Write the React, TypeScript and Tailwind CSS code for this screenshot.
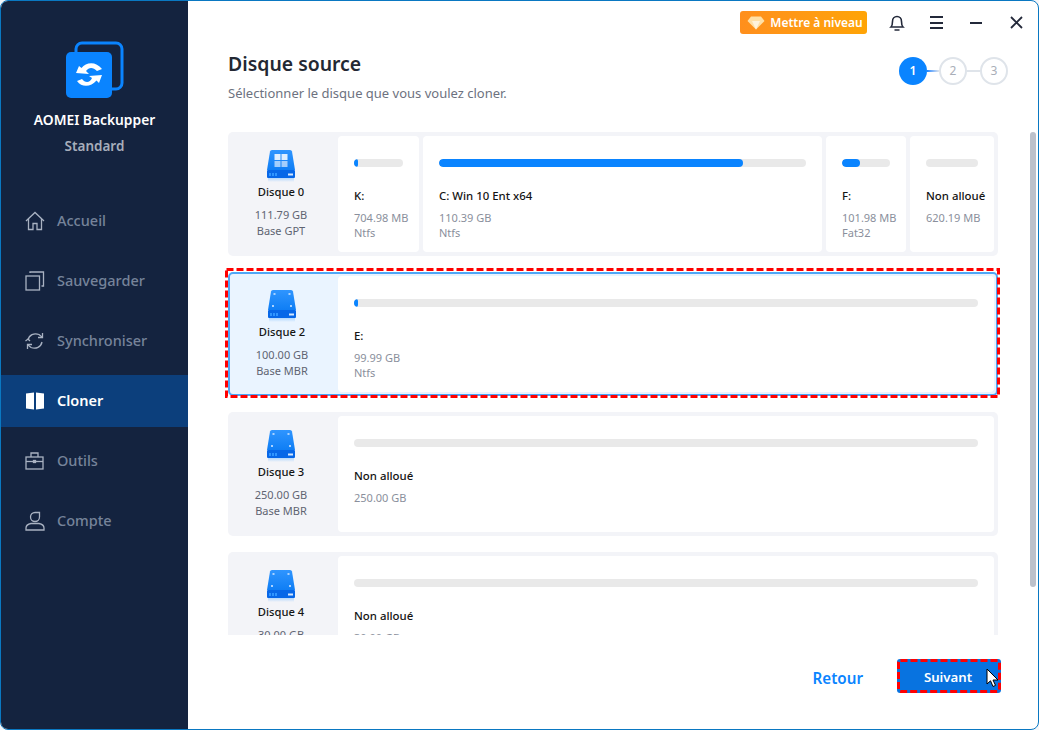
import React from "react";

const FONT = { fontFamily: '"Noto Sans", "Open Sans", sans-serif' };

function DiskIcon({ win }: { win?: boolean }) {
  return (
    <svg width="30" height="32" viewBox="0 0 30 32" className="block">
      <defs>
        <linearGradient id="dg" x1="0" y1="0" x2="0" y2="1">
          <stop offset="0" stopColor="#2f95ff" />
          <stop offset="1" stopColor="#0f7ef5" />
        </linearGradient>
        <linearGradient id="ds" x1="0" y1="0" x2="0" y2="1">
          <stop offset="0" stopColor="#8cc4ff" stopOpacity="0.6" />
          <stop offset="1" stopColor="#8cc4ff" stopOpacity="0" />
        </linearGradient>
      </defs>
      <path d="M4 1.5 Q4.3 0 6 0 H24 Q25.7 0 26 1.5 L29 20 H1 Z" fill="url(#dg)" />
      <rect x="1" y="20" width="28" height="8" rx="1" fill="#0767e8" />
      <rect x="2" y="28" width="26" height="4" fill="url(#ds)" />
      <rect x="3" y="23" width="2" height="3" fill="#2f95ff" />
      <rect x="6" y="23" width="2" height="3" fill="#2f95ff" />
      <rect x="9" y="23" width="2" height="3" fill="#2f95ff" />
      <rect x="22" y="23.5" width="5" height="2" fill="#d5e8ff" />
      {win ? (
        <g fill="#fff">
          <rect x="8.5" y="4" width="6" height="6" opacity="0.85" />
          <rect x="15.5" y="4" width="6" height="6" opacity="0.85" />
          <rect x="8.5" y="11" width="6" height="6" opacity="0.6" />
          <rect x="15.5" y="11" width="6" height="6" opacity="0.6" />
        </g>
      ) : (
        <g fill="#a9d2ff">
          <rect x="6.5" y="3" width="2" height="2" />
          <rect x="21.5" y="3" width="2" height="2" />
          <rect x="5" y="15" width="2" height="2" />
          <rect x="23" y="15" width="2" height="2" />
        </g>
      )}
    </svg>
  );
}

function Logo() {
  return (
    <svg width="58" height="58" viewBox="0 0 58 58" className="block">
      <rect x="10" y="2" width="46" height="46" rx="6" fill="none" stroke="#0a84ff" strokeWidth="3" />
      <rect x="0" y="11" width="46" height="46" rx="5" fill="#0a84ff" />
      <path d="M10 32 L13 25 L15.5 27 C20 21 30 20 36 28 L31 30 C27 26 23 26 20 30 L23 33 Z" fill="#fff" />
      <path d="M36 34 L33 42 L30.5 39.5 C25 46 16 47 11 40 L16 38 C19 42 24 42 26 37 L23 35 Z" fill="#fff" />
    </svg>
  );
}

const navIconCls = "block";
function HomeIcon() {
  return (
    <svg width="20" height="20" viewBox="0 0 20 20" fill="none" stroke="#a9b2c2" strokeWidth="1.3" className={navIconCls}>
      <path d="M1 10 L10 1.5 L19 10" />
      <path d="M3.5 8 V18.5 H8 V12.5 H12 V18.5 H16.5 V8" />
    </svg>
  );
}
function BackupIcon() {
  return (
    <svg width="20" height="20" viewBox="0 0 20 20" fill="none" stroke="#a9b2c2" strokeWidth="1.3" className={navIconCls}>
      <rect x="1" y="5" width="13.5" height="14" />
      <path d="M5 2 V1 H18.5 V15 H16.5" />
    </svg>
  );
}
function SyncIcon() {
  return (
    <svg width="20" height="18" viewBox="0 0 20 18" fill="none" stroke="#a9b2c2" strokeWidth="1.3" className={navIconCls}>
      <path d="M3 8 C4 3 9 0.5 14 2.5 L17 5" />
      <path d="M17.5 1 V5.5 H13" />
      <path d="M17 10 C16 15 11 17.5 6 15.5 L3 13" />
      <path d="M2.5 17 V12.5 H7" />
      <path d="M0.5 9 L3 7 L5 9" />
    </svg>
  );
}
function CloneIcon() {
  return (
    <svg width="18" height="18" viewBox="0 0 18 18" className={navIconCls}>
      <path d="M0 1.5 L8 0.5 V17.5 L0 16.5 Z" fill="#fff" />
      <path d="M18 1.5 L10 0.5 V17.5 L18 16.5 Z" fill="#fff" />
    </svg>
  );
}
function ToolsIcon() {
  return (
    <svg width="20" height="18" viewBox="0 0 20 18" fill="none" stroke="#a9b2c2" strokeWidth="1.3" className={navIconCls}>
      <rect x="1" y="5" width="17" height="12" />
      <path d="M6 5 V1 H13 V5" />
      <path d="M1 9.5 H18" />
      <rect x="8.5" y="8.5" width="2" height="2" fill="#a9b2c2" />
    </svg>
  );
}
function AccountIcon() {
  return (
    <svg width="20" height="20" viewBox="0 0 20 20" fill="none" stroke="#a9b2c2" strokeWidth="1.3" className={navIconCls}>
      <path d="M14.5 1.5 H10 A4.5 4.5 0 0 0 5.5 6 A4.5 4.5 0 0 0 10 10.5 A4.5 4.5 0 0 0 14.5 6 Z" />
      <path d="M1 19 V17 Q1 13.5 6 12.5 H14 Q19 13.5 19 17 V19 Z" />
    </svg>
  );
}

function NavItem({ icon, label, active }: { icon: React.ReactNode; label: string; active?: boolean }) {
  return (
    <div className={`flex h-[52px] items-center ${active ? "bg-[#0c3f7c]" : ""}`}>
      <div className="flex w-[56px] shrink-0 justify-center pr-[4px] pl-[16px]">{icon}</div>
      <span className={`text-[14.5px] ${active ? "font-semibold text-white" : "font-medium text-[#76839a]"}`}>{label}</span>
    </div>
  );
}

type Part = { w: string; fill: string; label: string; size: string; fs?: string };

function PartCard({ p }: { p: Part }) {
  return (
    <div className={`${p.w} h-full rounded-[4px] bg-white px-4 pt-[23px]`}>
      <div className="h-2 overflow-hidden rounded-full bg-[#e9e9e9]">
        <div className={`h-2 rounded-full bg-[#0a84ff] ${p.fill}`} />
      </div>
      <div className="mt-[20px] text-[11.4px] leading-[18px] font-medium whitespace-nowrap text-[#141414]">{p.label}</div>
      <div className="mt-[5px] text-[11px] leading-[15px] whitespace-nowrap text-[#8a8f9c]">{p.size}</div>
      {p.fs ? <div className="text-[11px] leading-[15px] whitespace-nowrap text-[#8a8f9c]">{p.fs}</div> : null}
    </div>
  );
}

function DiskRow({
  name,
  size,
  kind,
  win,
  parts,
  selected,
}: {
  name: string;
  size: string;
  kind: string;
  win?: boolean;
  parts: Part[];
  selected?: boolean;
}) {
  return (
    <div
      className={`flex h-[124px] w-[770px] shrink-0 items-center gap-1 rounded-[5px] ${
        selected ? "border-2 border-[#4fa6f7] bg-[#eaf4ff] pr-[2px]" : "bg-[#f3f4f8] pr-1"
      }`}
    >
      <div className={`flex shrink-0 flex-col items-center ${selected ? "w-[104px]" : "w-[106px]"}`}>
        <DiskIcon win={win} />
        <div className="mt-[1px] text-[11.2px] leading-[18px] font-medium text-[#141414]">{name}</div>
        <div className="mt-[6px] text-[11px] leading-[16px] text-[#5f6472]">{size}</div>
        <div className="text-[11px] leading-[16px] text-[#5f6472]">{kind}</div>
      </div>
      <div className="flex h-[116px] flex-1 gap-1">
        {parts.map((p) => (
          <PartCard key={p.label} p={p} />
        ))}
      </div>
    </div>
  );
}

export default function App() {
  return (
    <div style={FONT} className="h-[730px] w-[1039px] overflow-hidden bg-[#f4f6f9]">
      <div className="flex h-full w-full overflow-hidden rounded-[8px] border border-[#0a78c2] bg-white">
        {/* Sidebar */}
        <aside className="flex h-full w-[187px] shrink-0 flex-col bg-[#14233f]">
          <div className="flex flex-col items-center pt-[40px]">
            <div className="pr-[1px] pl-[2px]">
              <Logo />
            </div>
            <div className="mt-[11px] text-[13.8px] leading-[20px] font-semibold text-white">AOMEI Backupper</div>
            <div className="mt-[6px] text-[13.5px] leading-[20px] font-semibold text-[#a7aebb]">Standard</div>
          </div>
          <nav className="mt-[39px] flex flex-col gap-2">
            <NavItem icon={<HomeIcon />} label="Accueil" />
            <NavItem icon={<BackupIcon />} label="Sauvegarder" />
            <NavItem icon={<SyncIcon />} label="Synchroniser" />
            <NavItem icon={<CloneIcon />} label="Cloner" active />
            <NavItem icon={<ToolsIcon />} label="Outils" />
            <NavItem icon={<AccountIcon />} label="Compte" />
          </nav>
        </aside>

        {/* Main */}
        <main className="relative flex h-full min-w-0 flex-1 flex-col">
          {/* Title bar */}
          <div className="flex h-[42px] shrink-0 items-center justify-end pt-[1px]">
            <div className="flex h-[23px] w-[127px] items-center justify-center gap-[5px] rounded-[3px] bg-gradient-to-r from-[#ff8f1c] to-[#ffa405] pl-[3px] text-[12px] font-semibold text-white">
              <svg width="18" height="14" viewBox="0 0 18 14">
                <path d="M4 0.5 H14 L17.5 5 L9 13.5 L0.5 5 Z" fill="#ffe0a6" />
                <path d="M5 5 H13 L9 13.5 Z" fill="#fff3dc" />
              </svg>
              <span>Mettre à niveau</span>
            </div>
            <div className="ml-[20px] flex w-[20px] justify-center">
              <svg width="16" height="16" viewBox="0 0 16 16" fill="none" stroke="#23293a" strokeWidth="1.6">
                <path d="M2 12 C3.5 10.5 3.5 9 3.5 6.5 C3.5 3.5 5.5 1.5 8 1.5 C10.5 1.5 12.5 3.5 12.5 6.5 C12.5 9 12.5 10.5 14 12 Z" />
                <path d="M5.5 15 H10.5" />
              </svg>
            </div>
            <div className="ml-[23px] flex w-[13px] flex-col gap-[3.5px]">
              <div className="h-[2px] bg-[#23293a]" />
              <div className="h-[2px] bg-[#23293a]" />
              <div className="h-[2px] bg-[#23293a]" />
            </div>
            <div className="ml-[27px] h-[2px] w-[12px] bg-[#23293a]" />
            <div className="mr-[15px] ml-[28px]">
              <svg width="13" height="13" viewBox="0 0 13 13" stroke="#23293a" strokeWidth="1.8" className="block">
                <path d="M1 1 L12 12 M12 1 L1 12" />
              </svg>
            </div>
          </div>

          {/* Heading */}
          <div className="flex h-[66px] shrink-0 items-start justify-between pr-[30px] pl-[40px]">
            <div>
              <h1 className="pt-[8px] text-[19.4px] leading-[26px] font-semibold text-[#232833]">Disque source</h1>
              <p className="mt-[7px] text-[13px] leading-[18px] text-[#6d7280]">Sélectionner le disque que vous voulez cloner.</p>
            </div>
            <div className="flex items-center pt-[14px]">
              <div className="flex h-[28px] w-[28px] items-center justify-center rounded-full bg-[#0a84ff] text-[12px] font-semibold text-white">1</div>
              <div className="h-[2px] w-[12px] bg-gradient-to-r from-[#0a84ff] to-[#dfe4ea]" />
              <div className="flex h-[28px] w-[28px] items-center justify-center rounded-full border-2 border-[#dfe4ea] text-[12px] text-[#a9aeb8]">2</div>
              <div className="h-[2px] w-[13px] bg-[#dfe4ea]" />
              <div className="flex h-[28px] w-[28px] items-center justify-center rounded-full border-2 border-[#dfe4ea] text-[12px] text-[#a9aeb8]">3</div>
            </div>
          </div>

          {/* List */}
          <div className="relative mt-[23px] flex h-[503px] shrink-0 pl-[40px]">
            <div className="flex w-[770px] flex-col gap-4 overflow-hidden">
              <DiskRow
                name="Disque 0"
                size="111.79 GB"
                kind="Base GPT"
                win
                parts={[
                  { w: "w-[81px]", fill: "w-[4px]", label: "K:", size: "704.98 MB", fs: "Ntfs" },
                  { w: "w-[399px]", fill: "w-[304px]", label: "C: Win 10 Ent x64", size: "110.39 GB", fs: "Ntfs" },
                  { w: "w-[80px]", fill: "w-[18px]", label: "F:", size: "101.98 MB", fs: "Fat32" },
                  { w: "w-[84px]", fill: "w-0", label: "Non alloué", size: "620.19 MB" },
                ]}
              />
              <DiskRow
                name="Disque 2"
                size="100.00 GB"
                kind="Base MBR"
                selected
                parts={[{ w: "flex-1", fill: "w-[4px]", label: "E:", size: "99.99 GB", fs: "Ntfs" }]}
              />
              <DiskRow
                name="Disque 3"
                size="250.00 GB"
                kind="Base MBR"
                parts={[{ w: "flex-1", fill: "w-0", label: "Non alloué", size: "250.00 GB" }]}
              />
              <DiskRow
                name="Disque 4"
                size="30.00 GB"
                kind="Base MBR"
                parts={[{ w: "flex-1", fill: "w-0", label: "Non alloué", size: "30.00 GB" }]}
              />
            </div>
            {/* Scrollbar */}
            <div className="ml-[32px] h-[455px] w-[6px] rounded-full bg-[#bcc1cb]" />
            {/* Dashed highlight */}
            <svg width="775" height="130" className="absolute top-[136px] left-[37px]" fill="none">
              <rect x="1.5" y="1.5" width="772" height="127" stroke="#ff0000" strokeWidth="3" strokeDasharray="7 3" />
            </svg>
          </div>

          {/* Footer */}
          <div className="flex flex-1 items-start justify-end pt-[24px] pr-[37px]">
            <div className="mt-[7px] mr-[34px] text-[15.2px] leading-[24px] font-semibold text-[#0a84ff]">Retour</div>
            <div className="relative flex h-[34px] w-[104px] items-center justify-center rounded-[3px] bg-[#0873e0] pt-[3px] pr-[2px] text-[13.2px] font-semibold text-white">
              Suivant
              <svg width="104" height="34" className="absolute top-0 left-0" fill="none">
                <rect x="1.5" y="1.5" width="101" height="31" rx="2" stroke="#ff0000" strokeWidth="3" strokeDasharray="7 3" />
              </svg>
              <svg width="13" height="20" viewBox="0 0 13 20" className="absolute top-[9px] right-[2px]">
                <path d="M1 1 V16 L4.5 12.8 L7 18.5 L9.5 17.4 L7 12 H12 Z" fill="#fff" stroke="#000" strokeWidth="1" />
              </svg>
            </div>
          </div>
        </main>
      </div>
    </div>
  );
}
